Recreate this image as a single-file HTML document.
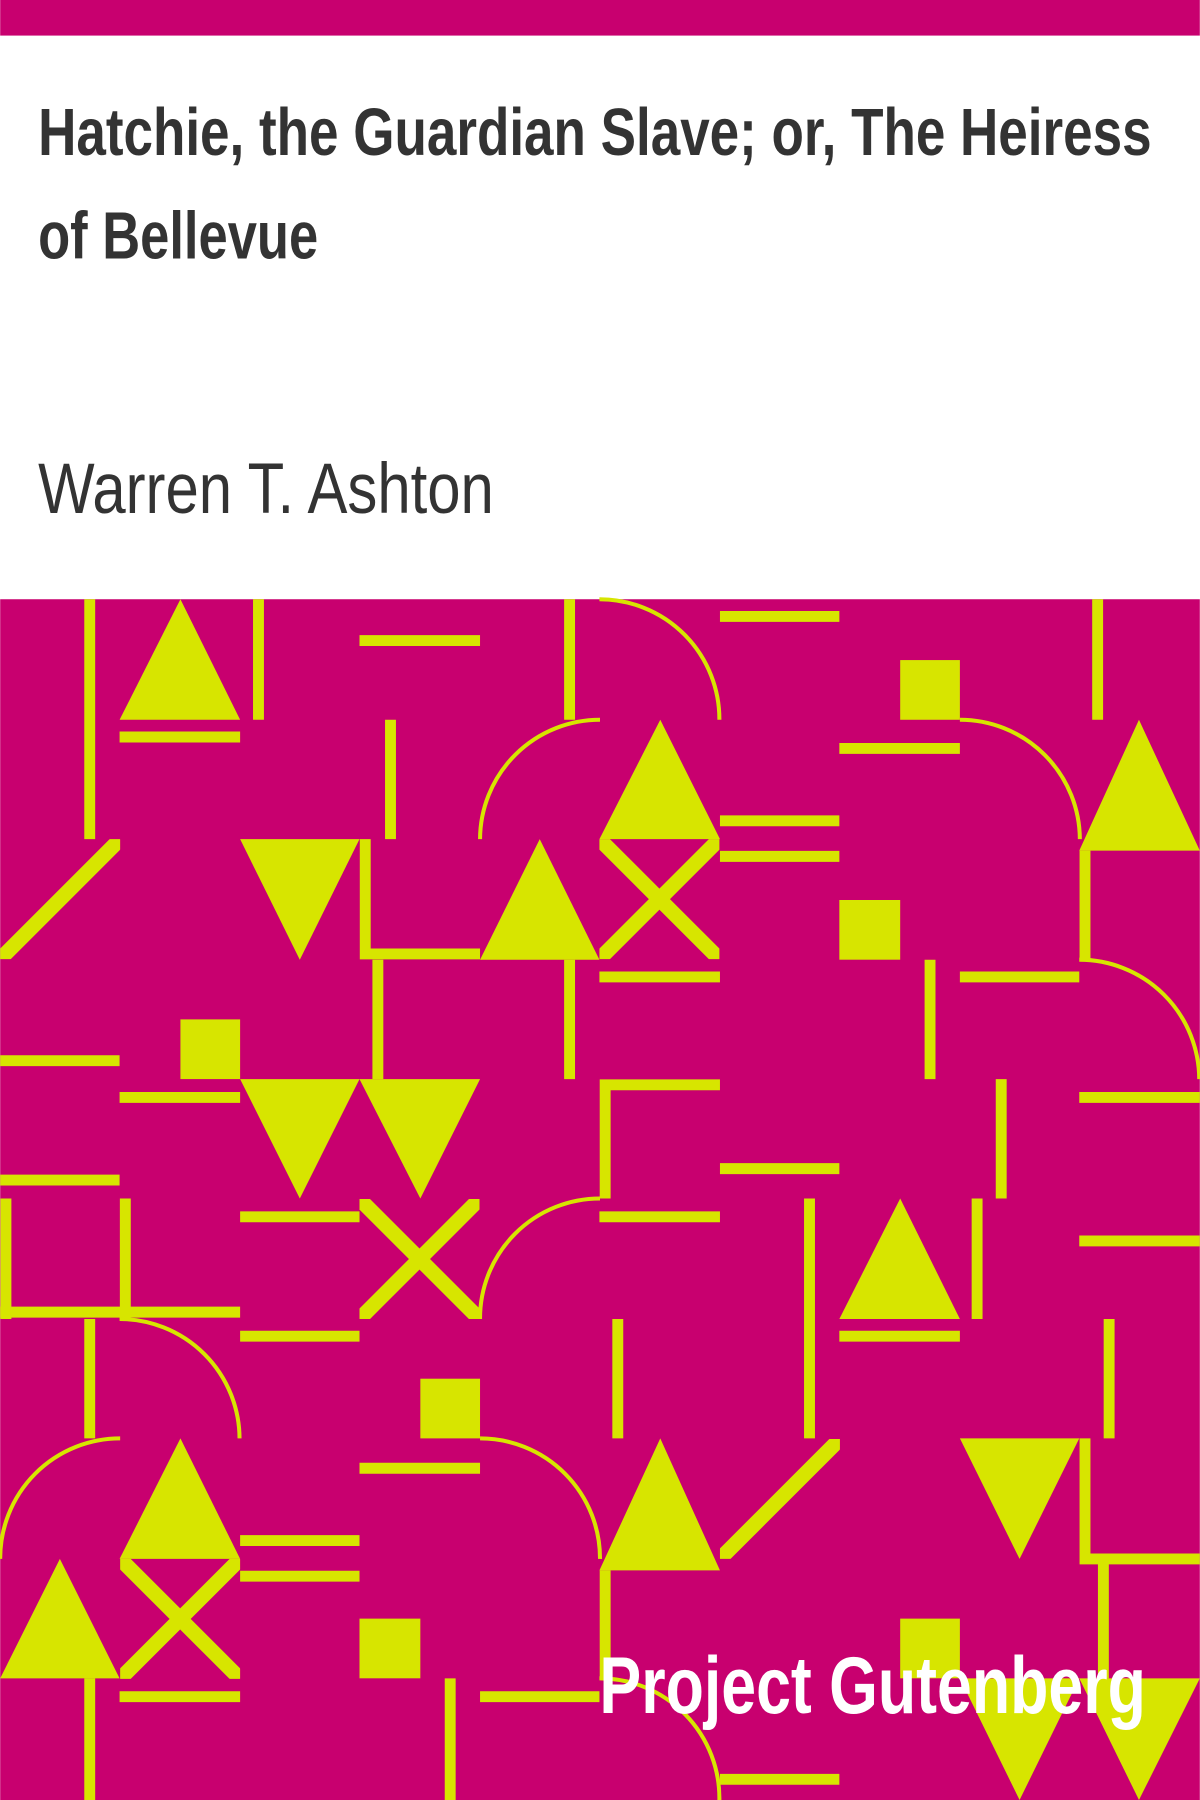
<!DOCTYPE html>
<html><head><meta charset="utf-8"><style>
html,body{margin:0;padding:0;background:#fff;}
svg{display:block;}
</style></head><body>
<svg width="1200" height="1800" viewBox="0 0 1045 1568" xmlns="http://www.w3.org/2000/svg">
<rect x="0" y="0" width="1045" height="1568" fill="#fff"/>
<rect x="0" y="0" width="1045" height="31" fill="#c8006f"/>
<text x="33" y="135" font-family="Liberation Sans, sans-serif" font-weight="bold" font-size="58" fill="#333" textLength="970" lengthAdjust="spacingAndGlyphs">Hatchie, the Guardian Slave; or, The Heiress</text>
<text x="33" y="225" font-family="Liberation Sans, sans-serif" font-weight="bold" font-size="58" fill="#333" textLength="244" lengthAdjust="spacingAndGlyphs">of Bellevue</text>
<text x="33" y="447" font-family="Liberation Sans, sans-serif" font-size="62" fill="#333" textLength="397" lengthAdjust="spacingAndGlyphs">Warren T. Ashton</text>
<rect x="0" y="522" width="1045" height="1046" fill="#c8006f"/>
<g fill="#d7e500">
<polygon points="104,627 209,627 157,522"/>
<rect x="784" y="575" width="52" height="52"/>
<polygon points="522,731 627,731 575,627"/>
<polygon points="940,741 1045,741 992,627"/>
<polygon points="209,731 313,731 261,836"/>
<polygon points="418,836 522,836 470,731"/>
<rect x="731" y="784" width="53" height="52"/>
<rect x="157" y="888" width="52" height="52"/>
<polygon points="209,940 313,940 261,1044"/>
<polygon points="313,940 418,940 366,1044"/>
<polygon points="731,1149 836,1149 784,1044"/>
<rect x="366" y="1201" width="52" height="52"/>
<polygon points="104,1358 209,1358 157,1253"/>
<polygon points="522,1368 627,1368 575,1253"/>
<polygon points="836,1253 940,1253 888,1358"/>
<polygon points="0,1462 104,1462 52,1358"/>
<rect x="313" y="1410" width="53" height="52"/>
<rect x="784" y="1410" width="52" height="52"/>
<polygon points="836,1462 940,1462 888,1568"/>
<polygon points="940,1462 1045,1462 992,1568"/>
</g>
<g stroke="#d7e500" stroke-width="9.5" fill="none">
<line x1="78" y1="522" x2="78" y2="731"/>
<line x1="104" y1="642" x2="209" y2="642"/>
<line x1="225" y1="522" x2="225" y2="627"/>
<line x1="313" y1="558" x2="418" y2="558"/>
<line x1="496" y1="522" x2="496" y2="627"/>
<line x1="627" y1="537" x2="731" y2="537"/>
<line x1="956" y1="522" x2="956" y2="627"/>
<line x1="340" y1="627" x2="340" y2="731"/>
<line x1="627" y1="715" x2="731" y2="715"/>
<line x1="627" y1="746" x2="731" y2="746"/>
<line x1="731" y1="652" x2="836" y2="652"/>
<polyline points="318,731 318,831 418,831"/>
<line x1="945" y1="741" x2="945" y2="836"/>
<line x1="329" y1="836" x2="329" y2="940"/>
<line x1="496" y1="836" x2="496" y2="940"/>
<line x1="522" y1="851" x2="627" y2="851"/>
<line x1="810" y1="836" x2="810" y2="940"/>
<line x1="836" y1="851" x2="940" y2="851"/>
<line x1="0" y1="924" x2="104" y2="924"/>
<line x1="104" y1="956" x2="209" y2="956"/>
<polyline points="527,1044 527,945 627,945"/>
<line x1="627" y1="1018" x2="731" y2="1018"/>
<line x1="872" y1="940" x2="872" y2="1044"/>
<line x1="940" y1="956" x2="1045" y2="956"/>
<line x1="0" y1="1028" x2="104" y2="1028"/>
<line x1="5" y1="1044" x2="5" y2="1149"/>
<line x1="0" y1="1143" x2="209" y2="1143"/>
<line x1="109" y1="1044" x2="109" y2="1149"/>
<line x1="209" y1="1060" x2="313" y2="1060"/>
<line x1="522" y1="1060" x2="627" y2="1060"/>
<line x1="705" y1="1044" x2="705" y2="1253"/>
<line x1="851" y1="1044" x2="851" y2="1149"/>
<line x1="940" y1="1081" x2="1045" y2="1081"/>
<line x1="78" y1="1149" x2="78" y2="1253"/>
<line x1="209" y1="1164" x2="313" y2="1164"/>
<line x1="731" y1="1164" x2="836" y2="1164"/>
<line x1="538" y1="1149" x2="538" y2="1253"/>
<line x1="966" y1="1149" x2="966" y2="1253"/>
<line x1="209" y1="1342" x2="313" y2="1342"/>
<line x1="209" y1="1373" x2="313" y2="1373"/>
<line x1="313" y1="1279" x2="418" y2="1279"/>
<polyline points="945,1253 945,1358 1045,1358"/>
<line x1="527" y1="1368" x2="527" y2="1462"/>
<line x1="961" y1="1358" x2="961" y2="1462"/>
<line x1="78" y1="1462" x2="78" y2="1568"/>
<line x1="104" y1="1478" x2="209" y2="1478"/>
<line x1="392" y1="1462" x2="392" y2="1568"/>
<line x1="418" y1="1478" x2="522" y2="1478"/>
<line x1="627" y1="1550" x2="731" y2="1550"/>
</g>
<g stroke="#d7e500" stroke-width="13" fill="none">
<svg x="0" y="731" width="104.5" height="104.5" overflow="hidden"><line x1="104.5" y1="0" x2="0" y2="104.5"/></svg>
<svg x="522" y="731" width="104.5" height="104.5" overflow="hidden"><line x1="0" y1="0" x2="104.5" y2="104.5"/><line x1="104.5" y1="0" x2="0" y2="104.5"/></svg>
<svg x="313" y="1044.5" width="104.5" height="104.5" overflow="hidden"><line x1="0" y1="0" x2="104.5" y2="104.5"/><line x1="104.5" y1="0" x2="0" y2="104.5"/></svg>
<svg x="627" y="1253.5" width="104.5" height="104.5" overflow="hidden"><line x1="104.5" y1="0" x2="0" y2="104.5"/></svg>
<svg x="104.5" y="1358" width="104.5" height="104.5" overflow="hidden"><line x1="0" y1="0" x2="104.5" y2="104.5"/><line x1="104.5" y1="0" x2="0" y2="104.5"/></svg>
</g>
<g stroke="#d7e500" stroke-width="3.5" fill="none">
<path d="M522,522 A104.5,104.5 0 0 1 626.5,627"/>
<path d="M418,731 A104.5,104.5 0 0 1 522.5,627"/>
<path d="M836,627 A104.5,104.5 0 0 1 940.5,731"/>
<path d="M940,836 A104.5,104.5 0 0 1 1044.5,940"/>
<path d="M418,1149 A104.5,104.5 0 0 1 522.5,1044"/>
<path d="M104,1149 A104.5,104.5 0 0 1 208.5,1253"/>
<path d="M0,1358 A104.5,104.5 0 0 1 104.5,1253"/>
<path d="M418,1253 A104.5,104.5 0 0 1 522.5,1358"/>
<path d="M522,1462 A104.5,104.5 0 0 1 626.5,1568"/>
</g>
<text x="522" y="1492" font-family="Liberation Sans, sans-serif" font-weight="bold" font-size="70" fill="#fff" textLength="476" lengthAdjust="spacingAndGlyphs">Project Gutenberg</text>
</svg>
</body></html>
